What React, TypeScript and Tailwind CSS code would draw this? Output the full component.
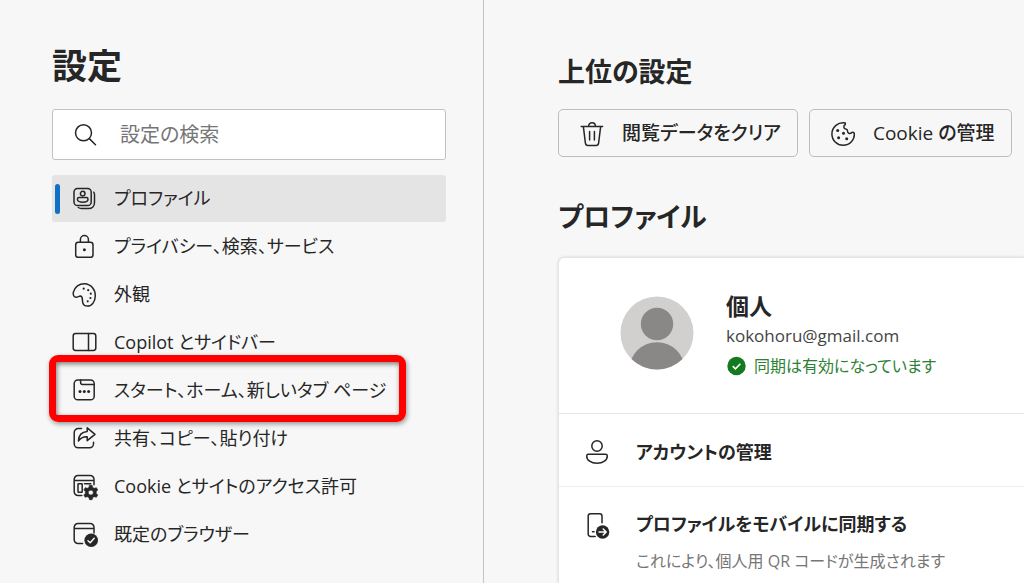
import type { ReactNode } from "react";

function Icon({ children, className = "" }: { children: ReactNode; className?: string }) {
  return (
    <svg
      viewBox="0 0 24 24"
      className={`size-6 shrink-0 overflow-visible ${className}`}
      fill="none"
      stroke="currentColor"
      strokeWidth="1.5"
      strokeLinecap="round"
      strokeLinejoin="round"
      aria-hidden="true"
    >
      {children}
    </svg>
  );
}

const ProfileIcon = () => (
  <Icon>
    <rect x="2" y="1.5" width="17.2" height="17" rx="3.6" />
    <circle cx="10.7" cy="6.6" r="2.3" />
    <path d="M7 10.6h7.4c1 0 1.6.7 1.6 1.6 0 1.9-2.3 3-5.3 3s-5.3-1.1-5.3-3c0-.9.6-1.6 1.6-1.6z" />
    <path d="M21.8 5.2c.5.8.7 1.5.7 2.5v7.8c0 3.6-2.4 6-6 6H9.5c-1.3 0-2.4-.4-3.2-1" />
  </Icon>
);

const LockIcon = () => (
  <Icon>
    <rect x="3.7" y="7.3" width="17.3" height="15" rx="2.6" />
    <path d="M8.4 7.1V4.5a4 4 0 0 1 8 0v2.6" />
    <circle cx="12.4" cy="14.7" r="1.5" fill="currentColor" stroke="none" />
  </Icon>
);

const PaletteIcon = () => (
  <Icon>
    <path d="M1.3 9.4C2.6 4 7.4.5 12.6.7c6.3.3 10.9 5.7 10.7 12.2-.2 5.500-3.300 10.200-7.600 10.200-3.200 0-5-2-5.200-4.900-.2-2.700.2-5-2.200-5.100-1.300 0-2.500 1.100-4 1.200-2.500 0-3.500-2.500-3-4.900z" />
    <g fill="currentColor" stroke="none">
      <circle cx="11.7" cy="5.7" r="1.1" />
      <circle cx="16.2" cy="7.2" r="1.1" />
      <circle cx="18.8" cy="10.7" r="1.1" />
      <circle cx="18.4" cy="15" r="1.1" />
      <circle cx="15.7" cy="18.3" r="1.1" />
    </g>
  </Icon>
);

const SidebarIcon = () => (
  <Icon>
    <rect x="1.2" y="2.5" width="22.6" height="17" rx="2.4" />
    <path d="M16.500 2.500v17" />
  </Icon>
);

const StartIcon = () => (
  <Icon>
    <rect x="2.2" y="1" width="20" height="19.8" rx="3.6" />
    <path d="M8.6 1v2.600c0 1.200.8 2 2 2h11.400" />
    <g fill="currentColor" stroke="none">
      <circle cx="8" cy="12.4" r="1.5" />
      <circle cx="12.3" cy="12.4" r="1.5" />
      <circle cx="16.6" cy="12.4" r="1.5" />
    </g>
  </Icon>
);

const ShareIcon = () => (
  <Icon>
    <path d="M9.500 1.500H6.200a4 4 0 0 0-4 4v11.300a4 4 0 0 0 4 4h11.300a4 4 0 0 0 4-4v-1.600" />
    <path d="M15.200.8 23 7.300l-7.800 6.400V9.800c-4-.2-6.700 1.200-8.800 4.200.3-5.400 3.600-9 8.800-9.400z" />
  </Icon>
);

const PermissionsIcon = () => (
  <Icon>
    <path d="M9.800 20.500H6a3.800 3.800 0 0 1-3.800-3.800V4.300A3.800 3.800 0 0 1 6 .5h12.200A3.800 3.800 0 0 1 22 4.300v5.400M2.200 5.400H22M12.500 8.800h6.300" />
    <rect x="6" y="8.800" width="4.200" height="8.400" rx=".5" />
    <path
      fill="currentColor"
      fillRule="evenodd"
      strokeWidth=".6"
      d="M17.500 11.700h2.600l.6 2.100 1.500.9 2.200-.6 1.400 2.400-1.600 1.500v1.800l1.600 1.500-1.400 2.400-2.200-.6-1.500.9-.6 2.100h-2.600l-.6-2.100-1.500-.9-2.200.6-1.400-2.400 1.600-1.500V18l-1.600-1.500 1.400-2.400 2.200.6 1.500-.9zM18.800 16.400a2.500 2.500 0 1 0 0 5 2.500 2.500 0 0 0 0-5z"
      transform="translate(0 -1.400)"
    />
  </Icon>
);

const BrowserIcon = () => (
  <Icon>
    <path d="M10.600 20.500H6a3.800 3.800 0 0 1-3.800-3.800V4.300A3.800 3.800 0 0 1 6 .5h12.200A3.800 3.800 0 0 1 22 4.300v5.600M2.200 5.400H22" />
    <circle cx="19.2" cy="17.300" r="6.8" fill="currentColor" stroke="none" />
    <path d="m16 17.700 2.200 2.100 4-4.600" stroke="#f7f7f7" />
  </Icon>
);

const TrashIcon = () => (
  <Icon>
    <path d="M1.200 4.600h21.400M8.600 4.300C8.600 2.200 10 .8 12 .8s3.400 1.400 3.400 3.500M3.400 4.800l2 16.300c.2 1.500 1.100 2.300 2.500 2.300h8.200c1.400 0 2.300-.8 2.500-2.300l2-16.300M9.600 9.500V18M14.400 9.500V18" />
  </Icon>
);

const CookieIcon = () => (
  <Icon>
    <path d="M14.300.9C7.200-.4.9 5 .9 12c0 6.300 5 11.300 11.300 11.300 6.500 0 11.600-5.400 11.100-12-.6-1.200-2-1.400-2.800-.4-1.800 1.300-4.200.2-4-2-.1-1.300-.7-1.700-1.700-1.800-2.300-.4-2.800-3.400-.5-4.600z" />
    <g fill="currentColor" stroke="none">
      <circle cx="6.7" cy="8.5" r="1.500" />
      <circle cx="12.5" cy="11.3" r="1.500" />
      <circle cx="7.6" cy="15.7" r="1.500" />
      <circle cx="15.7" cy="16.8" r="1.500" />
    </g>
  </Icon>
);

const menu: { label: string; icon: ReactNode; active?: boolean; marked?: boolean }[] = [
  { label: "プロファイル", icon: <ProfileIcon />, active: true },
  { label: "プライバシー、検索、サービス", icon: <LockIcon /> },
  { label: "外観", icon: <PaletteIcon /> },
  { label: "Copilot とサイドバー", icon: <SidebarIcon /> },
  { label: "スタート、ホーム、新しいタブ ページ", icon: <StartIcon />, marked: true },
  { label: "共有、コピー、貼り付け", icon: <ShareIcon /> },
  { label: "Cookie とサイトのアクセス許可", icon: <PermissionsIcon /> },
  { label: "既定のブラウザー", icon: <BrowserIcon /> },
];

function Sidebar() {
  return (
    <aside className="w-[484px] shrink-0 border-r border-[#c4c4c4] pt-11 pr-[37px] pl-[52px]">
      <h1 className="text-[35px] leading-[44px] font-bold">設定</h1>
      <label className="mt-[21px] flex h-[51px] items-center gap-[23px] rounded-[3px] border border-[#c2c2c2] bg-white pl-5">
        <Icon>
          <circle cx="10.5" cy="9.8" r="8" />
          <path d="m16.300 15.600 6.200 6.200" />
        </Icon>
        <input
          type="search"
          aria-label="設定の検索"
          placeholder="設定の検索"
          className="h-full min-w-0 flex-1 bg-transparent text-[20px] outline-none placeholder:text-[#767676]"
        />
      </label>
      <nav className="mt-[15px]">
        <ul className="flex flex-col gap-px">
          {menu.map((item) => (
            <li key={item.label} className="relative">
              <a
                href="#"
                aria-current={item.active ? "page" : undefined}
                className={`flex h-[47px] items-center gap-[18px] rounded-[3px] pl-5 text-[18px] whitespace-nowrap ${item.active ? "bg-[#e4e4e4]" : ""}`}
              >
                {item.active && <span className="absolute left-[3px] h-[30px] w-[5px] rounded-full bg-[#1070c8]" />}
                {item.icon}
                {item.label}
              </a>
              {item.marked && (
                <span className="pointer-events-none absolute -top-3 -left-[3px] h-[67px] w-[357px] rounded-[9px] border-[7px] border-[#fe0000] shadow-[1px_2px_5px_rgba(0,0,0,0.4),inset_1px_2px_5px_rgba(0,0,0,0.5)]" />
              )}
            </li>
          ))}
        </ul>
      </nav>
    </aside>
  );
}

function Button({ icon, children }: { icon: ReactNode; children: ReactNode }) {
  return (
    <button
      type="button"
      className="flex h-12 items-center gap-[18px] rounded-[5px] border border-[#bdbdbd] pt-px pr-4 pl-[21px] text-[19px] font-medium"
    >
      {icon}
      {children}
    </button>
  );
}

function Content() {
  return (
    <main className="min-w-0 flex-1 overflow-hidden pt-[51px] pl-[74px] whitespace-nowrap">
      <h2 className="text-[27px] leading-[42px] font-semibold">上位の設定</h2>
      <div className="mt-4 flex gap-[11px]">
        <Button icon={<TrashIcon />}>閲覧データをクリア</Button>
        <Button icon={<CookieIcon />}>Cookie の管理</Button>
      </div>
      <h2 className="mt-[39px] text-[27px] leading-[42px] font-semibold">プロファイル</h2>
      <section className="mt-[19px] rounded-tl-[6px] border-t border-l border-[#e4e4e4] bg-white shadow-[0_0_3px_rgba(0,0,0,0.14)]">
        <div className="flex h-[155px] items-center gap-8 pl-[61px]">
          <svg viewBox="0 0 74 74" className="mb-1.5 size-[74px] shrink-0" role="img" aria-label="個人">
            <clipPath id="avatar">
              <circle cx="37" cy="37" r="36.5" />
            </clipPath>
            <g clipPath="url(#avatar)">
              <rect width="74" height="74" fill="#d2d0ce" />
              <circle cx="37" cy="28" r="16.2" fill="#8a8886" />
              <circle cx="37" cy="74" r="27.8" fill="#8a8886" />
            </g>
          </svg>
          <div>
            <h3 className="text-[23px] leading-[30px] font-semibold">個人</h3>
            <p className="text-[17px] leading-[30px] text-[#444444]">kokohoru@gmail.com</p>
            <p className="flex items-center gap-2 text-[16px] leading-[30px] text-[#2b8233]">
              <svg viewBox="0 0 20 20" className="size-5" aria-hidden="true">
                <circle cx="10.5" cy="10" r="9.2" fill="#137a1f" />
                <path d="m6.700 10.200 2.700 2.600 5-5" fill="none" stroke="#fff" strokeWidth="1.6" />
              </svg>
              同期は有効になっています
            </p>
          </div>
        </div>
        <a href="#" className="flex h-[73px] items-center gap-[27px] border-t border-[#e6e6e6] pt-1 pl-[26px] text-[18px] font-semibold">
          <Icon>
            <circle cx="12" cy="6" r="5.2" />
            <path d="M3.400 14.200h17.200c1 0 1.700.7 1.700 1.700 0 4.300-4.300 7.300-10.300 7.300S1.700 20.200 1.700 15.900c0-1 .7-1.700 1.700-1.700z" />
          </Icon>
          アカウントの管理
        </a>
        <a href="#" className="flex gap-[27px] border-t border-[#eeeeee] pt-[19px] pb-2 pl-[26px]">
          <Icon className="mt-[7px]">
            <path d="M10.200 23.500H5.500a2.300 2.300 0 0 1-2.300-2.300V3.100A2.300 2.300 0 0 1 5.500.8h9.200A2.300 2.300 0 0 1 17 3.100v6.700M7.500 18.800h1.600" />
            <circle cx="17.6" cy="19" r="6.7" fill="currentColor" stroke="none" />
            <path d="M14 19h7M18.200 16l3 3-3 3" stroke="#fff" />
          </Icon>
          <span className="flex flex-col">
            <span className="text-[18px] leading-[36px] font-semibold">プロファイルをモバイルに同期する</span>
            <span className="text-[16px] leading-[38px] text-[#767676]">これにより、個人用 QR コードが生成されます</span>
          </span>
        </a>
      </section>
    </main>
  );
}

export default function App() {
  return (
    <div
      lang="ja"
      className="flex min-h-screen bg-[#f7f7f7] font-['Open_Sans','Noto_Sans_CJK_JP',sans-serif] text-[#262626] [font-feature-settings:'palt']"
    >
      <Sidebar />
      <Content />
    </div>
  );
}
